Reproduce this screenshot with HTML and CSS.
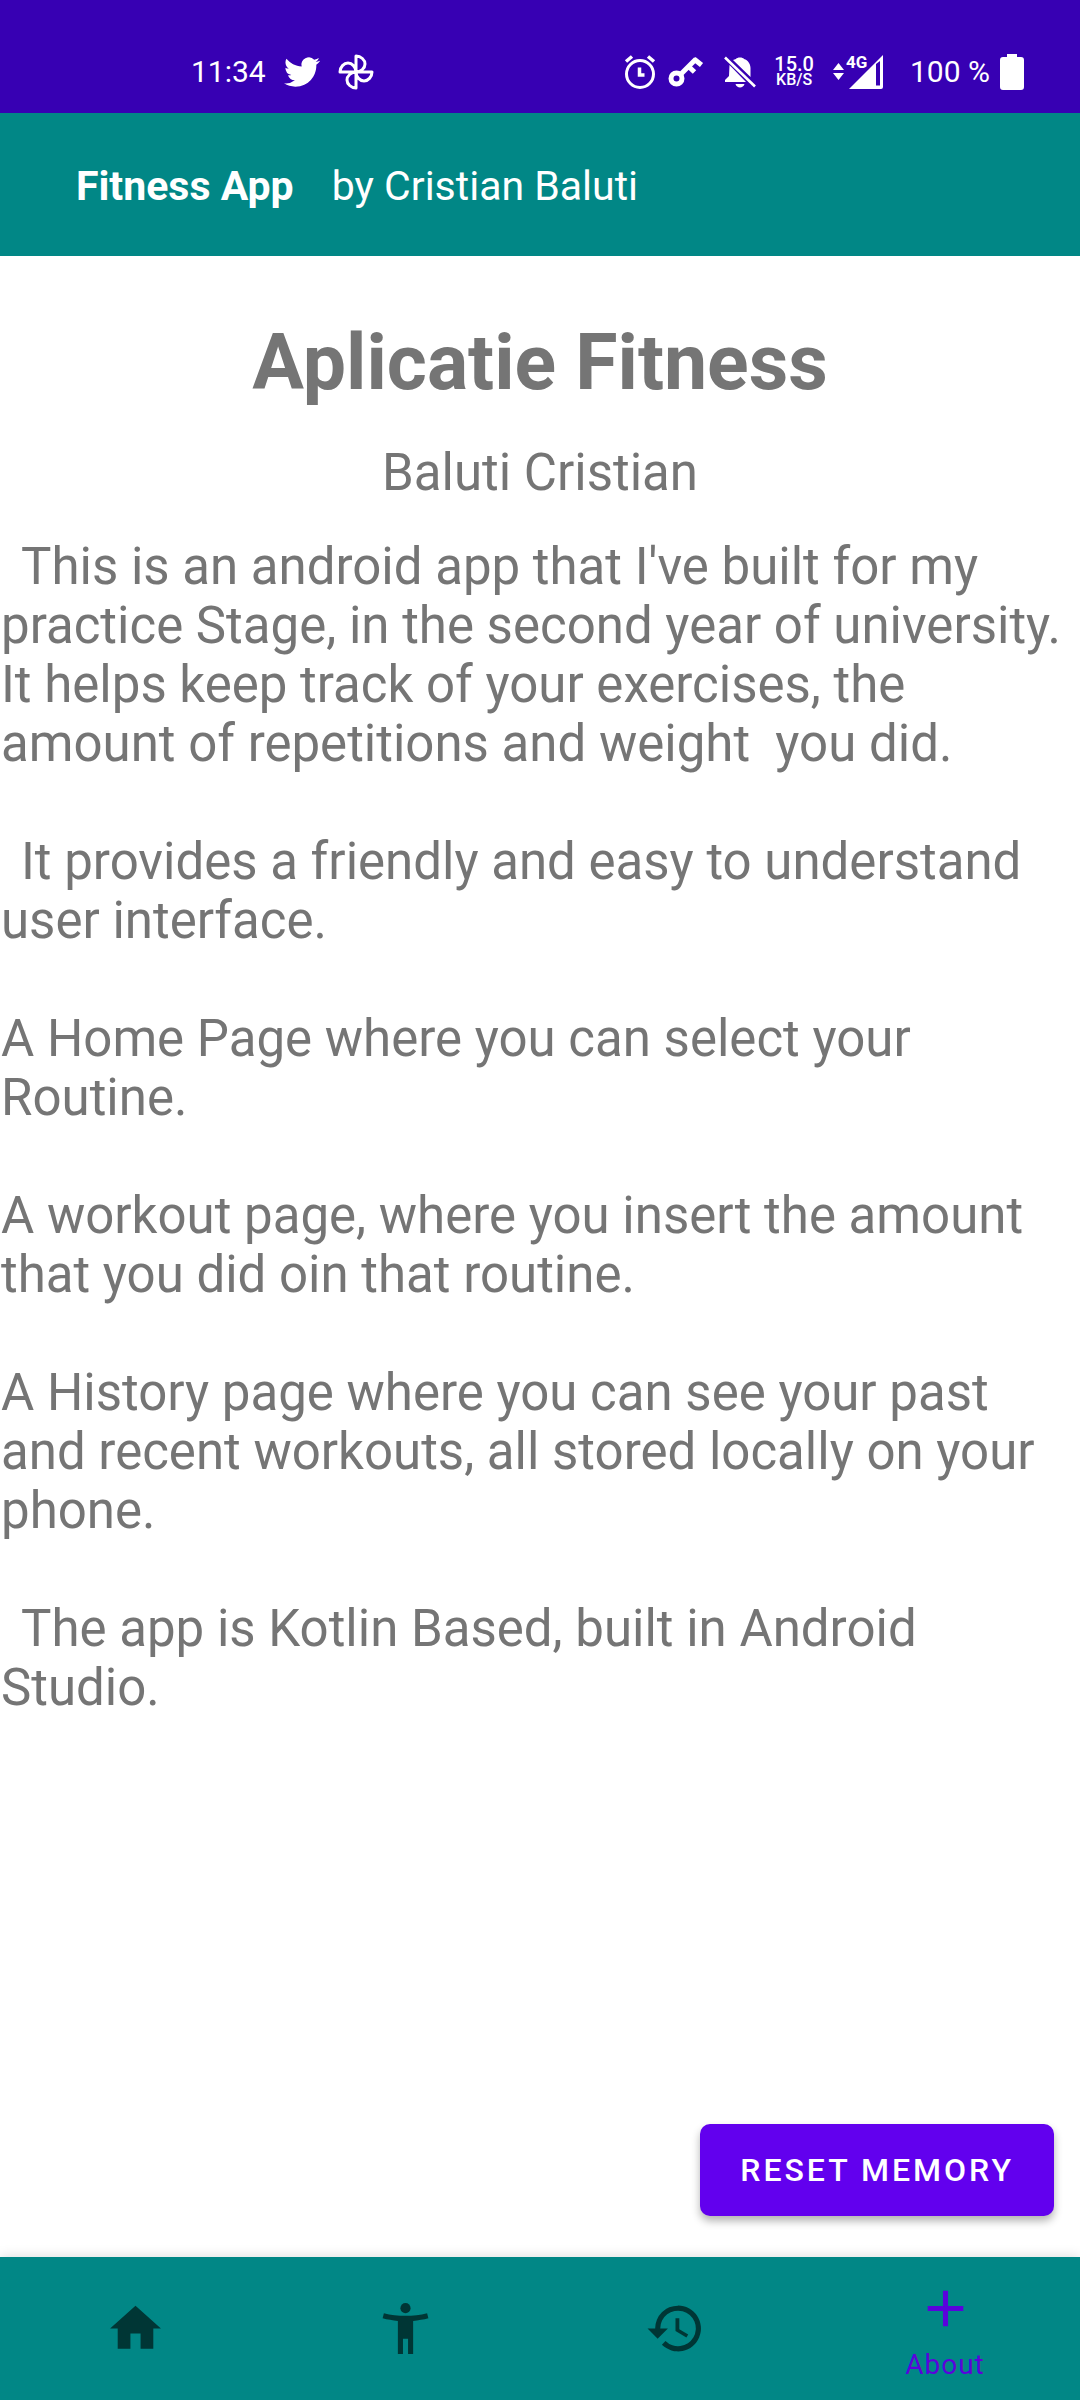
FILE: index.html
```html
<!DOCTYPE html>
<html lang="en">
<head>
<meta charset="utf-8">
<meta name="viewport" content="width=device-width, initial-scale=1">
<title>Fitness App</title>
<link rel="stylesheet" href="styles.css">
</head>
<body>
<div class="app">
  <div class="status-bar">
    <div class="status-group status-left">
      <time class="status-text">11:34</time>
      <svg class="icon-twitter" viewBox="0 0 24 24" aria-hidden="true"><path fill="currentColor" d="M23.95 4.57a10 10 0 0 1-2.82.77 4.96 4.96 0 0 0 2.16-2.72c-.95.55-2 .95-3.13 1.18a4.92 4.92 0 0 0-8.38 4.48C7.69 8.1 4.07 6.13 1.64 3.16a4.82 4.82 0 0 0-.67 2.48c0 1.71.87 3.21 2.19 4.1a4.9 4.9 0 0 1-2.23-.62v.06a4.92 4.92 0 0 0 3.95 4.83 5 5 0 0 1-2.21.08 4.94 4.94 0 0 0 4.6 3.42A9.87 9.87 0 0 1 0 19.54a14 14 0 0 0 7.55 2.21c9.05 0 14-7.5 14-13.98 0-.21 0-.42-.02-.63a9.94 9.94 0 0 0 2.46-2.55z"/></svg>
      <svg class="icon-photos" viewBox="0 0 36 36" aria-hidden="true" fill="none" stroke="currentColor" stroke-width="3" stroke-linejoin="round"><path d="M18 18V2c5 0 9 4 9 8 0 4-4 8-9 8zM18 18h16c0 5-4 9-8 9-4 0-8-4-8-9zM18 18v16c-5 0-9-4-9-8 0-4 4-8 9-8zM18 18H2c0-5 4-9 8-9 4 0 8 4 8 9z"/></svg>
    </div>
    <div class="status-group">
      <svg class="icon-alarm" viewBox="0 0 32 34" aria-hidden="true" fill="none" stroke="currentColor"><circle cx="16" cy="19" r="13.5" stroke-width="3"/><path stroke-width="3.500" d="M15.500 12.500v7.500h5M2 6.500l6-5M30 6.500l-6-5"/></svg>
      <svg class="icon-key" viewBox="0 0 36 32" aria-hidden="true" fill="none" stroke="currentColor"><circle cx="8.500" cy="22.500" r="5.500" stroke-width="5"/><path stroke-width="5" d="M13 18L28 3"/><path stroke-width="5" d="M26 3l7.500 6M20 10l6.500 6"/></svg>
      <svg class="icon-bell" viewBox="0 0 32 32" aria-hidden="true"><path fill="currentColor" d="M12 3c1-2 7-2 8 0 4 1 6.500 5 6.500 9v9L9 4zM5.500 9L22 26H1v-2l4-4zM11.500 28h9c-1 4.500-8 4.500-9 0z"/><path stroke="currentColor" stroke-width="2.600" d="M1 1.500l30 29"/></svg>
      <div class="net-speed"><span class="net-value">15.0</span><span class="net-unit">KB/S</span></div>
      <div class="signal">
        <svg class="icon-signal" viewBox="0 0 52 36" aria-hidden="true"><path fill="currentColor" d="M1 16h11L6.500 9zM1 19h11l-5.500 7z"/><path fill="currentColor" fill-rule="evenodd" d="M17 35L51 1v32q0 2-2 2zM44 10v21.500h4V7z"/></svg>
        <span class="signal-type">4G</span>
      </div>
      <span class="status-text battery-text">100 %</span>
      <svg class="icon-battery" viewBox="0 0 24 36" aria-hidden="true"><path fill="currentColor" d="M7 0h10v3h4q3 0 3 3v27q0 3-3 3H3q-3 0-3-3V6q0-3 3-3h4z"/></svg>
    </div>
  </div>

  <header class="app-bar">
    <span class="app-name">Fitness App</span>
    <span>by Cristian Baluti</span>
  </header>

  <main class="content">
    <h1 class="title">Aplicatie Fitness</h1>
    <p class="author">Baluti Cristian</p>
    <div class="description">
      <p class="indented">This is an android app that I've built for my practice Stage, in the second year of university. It helps keep track of your exercises, the amount of repetitions and weight&nbsp; you did.</p>
      <p class="indented">It provides a friendly and easy to understand user interface.</p>
      <p>A Home Page where you can select your Routine.</p>
      <p>A workout page, where you insert the amount that you did oin that routine.</p>
      <p>A History page where you can see your past and recent workouts, all stored locally on your phone.</p>
      <p class="indented">The app is Kotlin Based, built in Android Studio.</p>
    </div>
    <button class="reset-button" type="button">RESET MEMORY</button>
  </main>

  <nav class="bottom-nav">
    <a class="nav-item" href="#home" aria-label="Home"><svg class="nav-icon" viewBox="0 0 24 24"><path fill="currentColor" d="M10 20v-6h4v6h5v-8h3L12 3 2 12h3v8z"/></svg></a>
    <a class="nav-item" href="#workout" aria-label="Workout"><svg class="nav-icon" viewBox="0 0 24 24"><circle cx="12" cy="4" r="2" fill="currentColor"/><path fill="currentColor" d="M15 9v13h-2v-6h-2v6H9V9c-2.020-.17-4.110-.490-6-1l.5-2c2.610.7 5.670 1 8.500 1s5.890-.3 8.500-1l.5 2c-1.890.510-3.980.830-6 1z"/></svg></a>
    <a class="nav-item" href="#history" aria-label="History"><svg class="nav-icon" viewBox="0 0 24 24"><path fill="currentColor" d="M13 3a9 9 0 0 0-9 9H1l3.890 3.890.070.140L9 12H6a7 7 0 1 1 2.060 4.940l-1.420 1.420A9 9 0 1 0 13 3zm-1 5v5l4.280 2.540.720-1.210-3.500-2.080V8z"/></svg></a>
    <a class="nav-item nav-active" href="#about" aria-current="page"><svg class="nav-icon" viewBox="0 0 24 24" aria-hidden="true"><path fill="currentColor" d="M19 13h-6v6h-2v-6H5v-2h6V5h2v6h6z"/></svg><span>About</span></a>
  </nav>
</div>
</body>
</html>
```
FILE: styles.css
```css
* { box-sizing: border-box; }
body {
  margin: 0;
  background: #fff;
  color: #757575;
  font-family: Roboto, "Liberation Sans", sans-serif;
}
h1, p { margin: 0; }
svg { display: block; flex: none; }

.app {
  min-height: 100vh;
  display: flex;
  flex-direction: column;
}

.status-bar {
  height: 113px;
  padding: 30px 56px 0 191px;
  display: flex;
  align-items: center;
  justify-content: space-between;
  background: #3700b3;
  color: #fff;
}
.status-group { display: flex; align-items: center; }
.status-left { gap: 18px; }
.status-text { font-size: 30px; line-height: 36px; white-space: nowrap; }
.icon-twitter { width: 36px; height: 36px; }
.icon-photos { width: 36px; height: 36px; }
.icon-alarm { width: 32px; height: 34px; margin-right: 12px; }
.icon-key { width: 36px; height: 32px; margin-right: 20px; }
.icon-bell { width: 32px; height: 32px; margin-right: 18px; }
.net-speed {
  display: flex;
  flex-direction: column;
  align-items: center;
  margin-right: 18px;
  font-weight: 500;
}
.net-value { font-size: 20px; line-height: 16px; }
.net-unit { font-size: 16px; line-height: 16px; }
.signal { position: relative; margin-right: 26px; }
.icon-signal { width: 52px; height: 36px; }
.signal-type {
  position: absolute;
  top: 0;
  left: 14px;
  font-size: 17px;
  line-height: 16px;
  font-weight: 700;
}
.battery-text { margin-right: 10px; }
.icon-battery { width: 24px; height: 36px; }

.app-bar {
  height: 143px;
  padding: 2px 76px 0;
  display: flex;
  align-items: center;
  gap: 38px;
  background: #018786;
  color: #fff;
  font-size: 41px;
  line-height: 48px;
}
.app-name { font-weight: 700; }

.content {
  flex: 1;
  display: flex;
  flex-direction: column;
  padding: 61px 0 41px;
}
.title {
  font-size: 77px;
  line-height: 92px;
  font-weight: 700;
  text-align: center;
}
.author {
  margin-top: 34px;
  font-size: 51px;
  line-height: 59px;
  text-align: center;
}
.description {
  display: flex;
  flex-direction: column;
  gap: 59px;
  margin-top: 35px;
  padding: 0 1px;
  font-size: 51px;
  line-height: 59px;
}
.indented { text-indent: 20px; }
.reset-button {
  align-self: flex-end;
  margin: auto 26px 0;
  padding: 0 40px;
  height: 92px;
  border: 0;
  border-radius: 10px;
  background: #6200ee;
  color: #fff;
  box-shadow: 0 5px 8px rgba(0, 0, 0, 0.3);
  font-family: inherit;
  font-size: 32px;
  font-weight: 500;
  letter-spacing: 3px;
}

.bottom-nav {
  height: 143px;
  display: grid;
  grid-template-columns: repeat(4, 1fr);
  background: #018786;
  box-shadow: 0 0 12px rgba(0, 0, 0, 0.15);
}
.nav-item {
  display: flex;
  flex-direction: column;
  align-items: center;
  justify-content: center;
  gap: 8px;
  color: #003635;
  text-decoration: none;
  font-size: 28px;
  line-height: 36px;
  letter-spacing: 1px;
}
.nav-active { padding-top: 3px; color: #5a03dc; }
.nav-icon { width: 61px; height: 61px; }
```
